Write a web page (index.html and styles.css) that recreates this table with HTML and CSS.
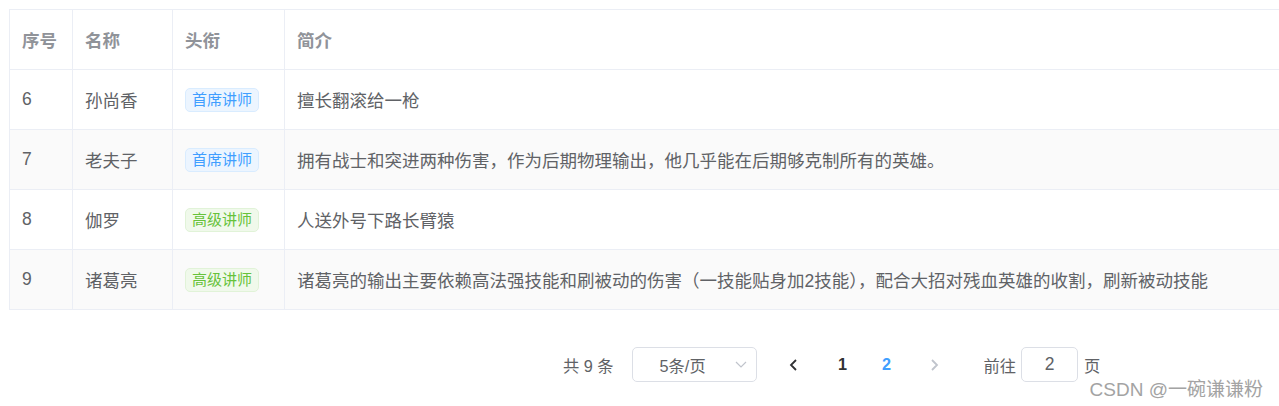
FILE: index.html
```html
<!DOCTYPE html>
<html lang="zh-CN">
<head>
    <meta charset="utf-8">
    <title>讲师列表</title>
    <link rel="stylesheet" href="styles.css">
</head>
<body>
    <div class="page">
        <div class="table-wrap">
            <table class="data-table">
                <colgroup>
                    <col class="col-index">
                    <col class="col-name">
                    <col class="col-title">
                    <col>
                </colgroup>
                <thead>
                    <tr>
                        <th>序号</th>
                        <th>名称</th>
                        <th>头衔</th>
                        <th>简介</th>
                    </tr>
                </thead>
                <tbody>
                    <tr>
                        <td>6</td>
                        <td>孙尚香</td>
                        <td><span class="tag tag-primary">首席讲师</span></td>
                        <td>擅长翻滚给一枪</td>
                    </tr>
                    <tr class="striped">
                        <td>7</td>
                        <td>老夫子</td>
                        <td><span class="tag tag-primary">首席讲师</span></td>
                        <td>拥有战士和突进两种伤害，作为后期物理输出，他几乎能在后期够克制所有的英雄。</td>
                    </tr>
                    <tr>
                        <td>8</td>
                        <td>伽罗</td>
                        <td><span class="tag tag-success">高级讲师</span></td>
                        <td>人送外号下路长臂猿</td>
                    </tr>
                    <tr class="striped">
                        <td>9</td>
                        <td>诸葛亮</td>
                        <td><span class="tag tag-success">高级讲师</span></td>
                        <td>诸葛亮的输出主要依赖高法强技能和刷被动的伤害（一技能贴身加2技能），配合大招对残血英雄的收割，刷新被动技能</td>
                    </tr>
                </tbody>
            </table>
        </div>

        <div class="pagination">
            <span class="total">共 9 条</span>
            <div class="sizes">
                <span class="sizes-text">5条/页</span>
                <svg class="sizes-arrow" width="12" height="7" viewBox="0 0 12 7">
                    <polyline points="1,1 6,6 11,1" fill="none" stroke="#c0c4cc" stroke-width="1.2"/>
                </svg>
            </div>
            <button class="btn-prev">
                <svg width="9" height="12" viewBox="0 0 9 12">
                    <polyline points="7,1 2,6 7,11" fill="none" stroke="#303133" stroke-width="1.8"/>
                </svg>
            </button>
            <ul class="pager">
                <li>1</li>
                <li class="active">2</li>
            </ul>
            <button class="btn-next">
                <svg width="9" height="12" viewBox="0 0 9 12">
                    <polyline points="2,1 7,6 2,11" fill="none" stroke="#c0c4cc" stroke-width="1.8"/>
                </svg>
            </button>
            <span class="jump">前往</span>
            <span class="jump-input">2</span>
            <span class="jump-unit">页</span>
        </div>
    </div>

    <div class="watermark">CSDN @一碗谦谦粉</div>
</body>
</html>
```

FILE: styles.css
```css
body {
    margin: 0;
    font-family: 'Liberation Sans', 'Noto Sans CJK SC', sans-serif;
    background-color: #fff;
    color: #606266;
    overflow: hidden;
}

.page {
    padding: 9px 0 0 9px;
}

.table-wrap {
    width: 1270px;
    overflow: hidden;
}

.data-table {
    width: 1280px;
    border-collapse: separate;
    border-spacing: 0;
    border-top: 1px solid #ebeef5;
    border-left: 1px solid #ebeef5;
    font-size: 17.5px;
}

.col-index { width: 63px; }
.col-name { width: 100px; }
.col-title { width: 112px; }

.data-table th,
.data-table td {
    height: 60px;
    padding: 0 12px;
    text-align: left;
    border-right: 1px solid #ebeef5;
    border-bottom: 1px solid #ebeef5;
    box-sizing: border-box;
    white-space: nowrap;
}

.data-table th {
    color: #909399;
    font-weight: bold;
}

.data-table td {
    color: #606266;
}

.data-table tr.striped td {
    background-color: #fafafa;
}

.tag {
    display: inline-block;
    height: 24px;
    line-height: 22px;
    padding: 0 6px;
    font-size: 15px;
    border: 1px solid;
    border-radius: 5px;
    box-sizing: border-box;
    vertical-align: middle;
}

.tag-primary {
    background-color: #ecf5ff;
    border-color: #d9ecff;
    color: #409eff;
}

.tag-success {
    background-color: #f0f9eb;
    border-color: #e1f3d8;
    color: #67c23a;
}

.pagination {
    display: flex;
    align-items: center;
    height: 35px;
    margin: 37px 0 0 554px;
    font-size: 16.25px;
    color: #606266;
}

.total {
    margin-right: 18px;
}

.sizes {
    position: relative;
    width: 125px;
    height: 35px;
    border: 1px solid #dcdfe6;
    border-radius: 5px;
    box-sizing: border-box;
    display: flex;
    align-items: center;
    padding-left: 27px;
}

.sizes-arrow {
    position: absolute;
    right: 9px;
    top: 13px;
}

.btn-prev,
.btn-next {
    border: none;
    background: none;
    padding: 0;
    height: 35px;
    display: flex;
    align-items: center;
    justify-content: center;
}

.btn-prev {
    width: 48px;
    margin-left: 13px;
}

.btn-next {
    width: 52px;
}

.pager {
    display: flex;
    list-style: none;
    margin: 0 0 0 3px;
    padding: 0;
}

.pager li {
    width: 44px;
    text-align: center;
    font-weight: bold;
    color: #303133;
}

.pager li.active {
    color: #409eff;
}

.jump {
    margin-left: 23px;
}

.jump-input {
    width: 57px;
    height: 35px;
    margin-left: 5px;
    border: 1px solid #dcdfe6;
    border-radius: 5px;
    box-sizing: border-box;
    display: flex;
    align-items: center;
    justify-content: center;
    font-size: 17.5px;
}

.jump-unit {
    margin-left: 6px;
}

.watermark {
    position: absolute;
    right: 16px;
    top: 374px;
    font-size: 19px;
    color: #a3a3a3;
}
```
